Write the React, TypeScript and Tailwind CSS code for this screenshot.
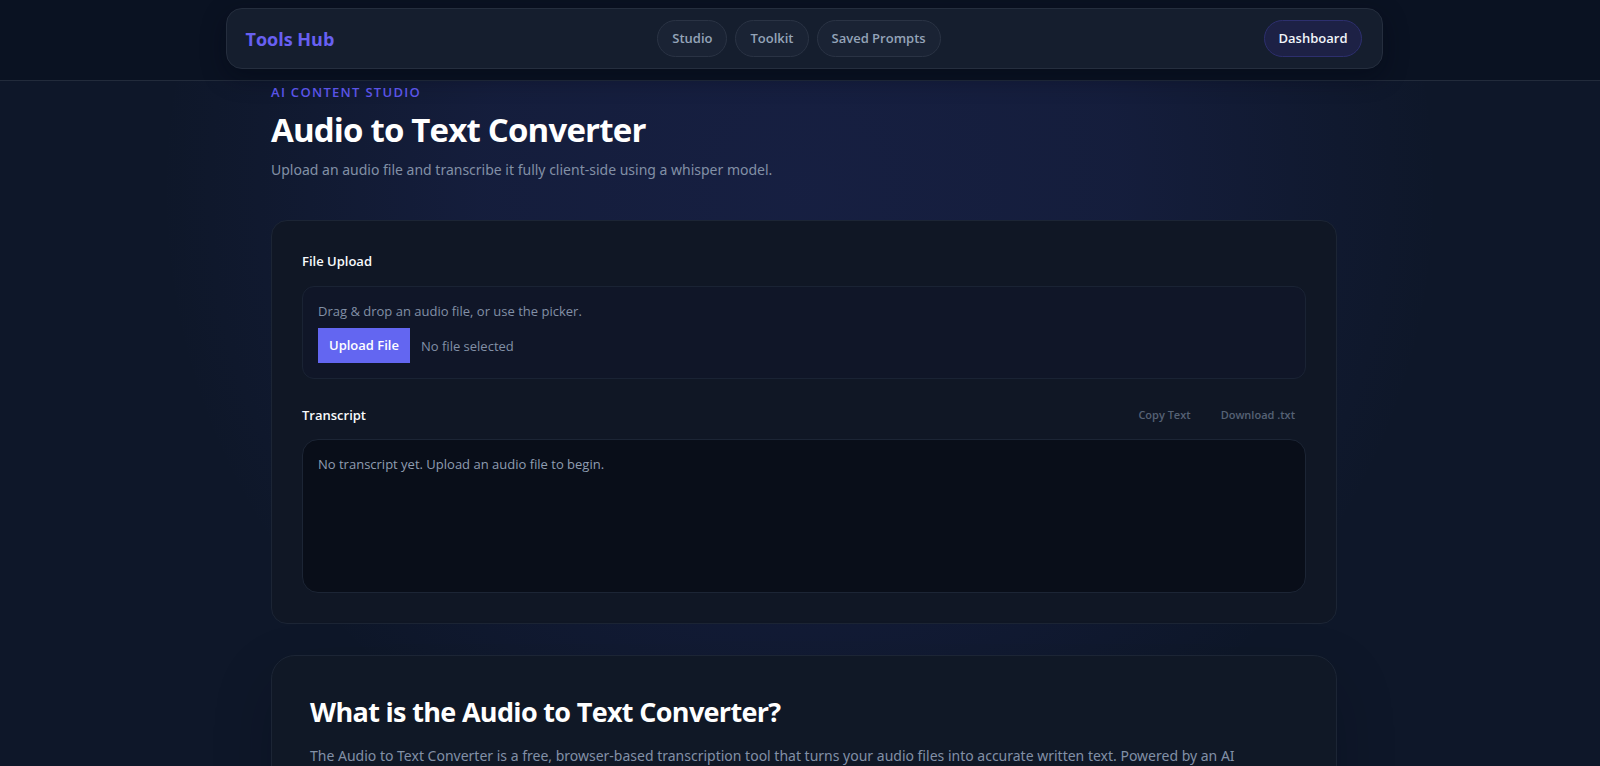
import { useRef, useState } from 'react';

const navLinks = ['Studio', 'Toolkit', 'Saved Prompts'];

const Header = () => (
  <header className="border-b border-[#222b3b] bg-[#0a1222] pt-2 pb-[11px] pl-2">
    <div className="mx-auto flex max-w-[1157px] items-center justify-between rounded-2xl border border-[#252e3e] bg-[#151e2e] px-[19px] py-[11px] shadow-[0_8px_24px_rgba(2,8,20,0.4)]">
      <a href="#" className="text-lg leading-6 font-bold text-[#6860f2]">
        Tools Hub
      </a>
      <nav className="flex gap-2">
        {navLinks.map((label) => (
          <a
            key={label}
            href="#"
            className="rounded-full border border-[#2a3344] bg-[#1a2334] px-[14px] py-2 text-[13px] leading-[19px] font-semibold text-[#94a3b8]"
          >
            {label}
          </a>
        ))}
      </nav>
      <a
        href="#"
        className="rounded-full border border-[#2d2f6e] bg-[#1d2145] px-[14px] py-2 text-[13px] leading-[19px] font-semibold text-[#f1f5f9]"
      >
        Dashboard
      </a>
    </div>
  </header>
);

const Converter = () => {
  const inputRef = useRef<HTMLInputElement>(null);
  const [fileName, setFileName] = useState('');

  return (
    <section className="rounded-2xl border border-[#1c2535] bg-[#101725] px-[30px] py-[30px]">
      <h2 className="text-[13px] leading-5 font-semibold text-[#f8fafc]">File Upload</h2>
      <div className="mt-[15px] rounded-xl border border-[#1a2334] bg-[#101628] px-[15px] pt-[14px] pb-[15px]">
        <label htmlFor="audio-file" className="block text-[13px] leading-5 text-[#8290a6]">
          Drag &amp; drop an audio file, or use the picker.
        </label>
        <input
          ref={inputRef}
          id="audio-file"
          type="file"
          accept="audio/*"
          className="hidden"
          onChange={(e) => setFileName(e.target.files?.[0]?.name ?? '')}
        />
        <div className="mt-[7px] flex items-center gap-[11px]">
          <button
            type="button"
            onClick={() => inputRef.current?.click()}
            className="bg-[#6366f1] px-[11px] py-2 text-[13px] leading-[19px] font-semibold text-white"
          >
            Upload File
          </button>
          <span className="text-[13px] leading-5 text-[#8290a6]">{fileName || 'No file selected'}</span>
        </div>
      </div>

      <div className="mt-[26px] flex items-center justify-between">
        <h2 className="text-[13px] leading-5 font-semibold text-[#f8fafc]">Transcript</h2>
        <div className="flex gap-2 text-[11px] leading-5 font-semibold text-[#566275]">
          <button type="button" className="px-[11px]">
            Copy Text
          </button>
          <button type="button" className="px-[11px]">
            Download .txt
          </button>
        </div>
      </div>
      <div className="mt-[14px] min-h-[154px] rounded-2xl border border-[#1c2535] bg-[#090e19] px-[15px] py-[14px] text-[13px] leading-5 text-[#8f9db1]">
        No transcript yet. Upload an audio file to begin.
      </div>
    </section>
  );
};

const About = () => (
  <section className="mt-[31px] rounded-3xl border border-[#1c2535] bg-[#101826] px-[38px] pt-[36px] pb-10 shadow-[0_24px_60px_rgba(2,8,20,0.2)]">
    <h2 className="text-[27px] leading-10 font-bold tracking-tight text-white">What is the Audio to Text Converter?</h2>
    <p className="mt-[10px] font-['Noto_Sans',sans-serif] text-[14px] leading-7 text-[#8290a6]">
      The Audio to Text Converter is a free, browser-based transcription tool that turns your audio files into accurate
      written text. Powered by an AI
    </p>
  </section>
);

const App = () => (
  <div className="flex h-screen flex-col overflow-hidden bg-[#0e1729] bg-[radial-gradient(circle_640px_at_50%_190px,rgba(79,86,229,0.13),rgba(79,86,229,0.1)_50%,transparent)] font-['Open_Sans','Noto_Sans',sans-serif]">
    <Header />
    <main className="pl-2">
      <div className="mx-auto max-w-[1066px] pt-px">
        <p className="text-[13px] leading-5 font-semibold tracking-widest text-[#5b54e6] uppercase">
          AI Content Studio
        </p>
        <h1 className="mt-2 text-[33px] leading-10 font-bold tracking-tight text-white">Audio to Text Converter</h1>
        <p className="mt-2 mb-[38px] font-['Noto_Sans',sans-serif] text-[14px] leading-6 text-[#8290a6]">
          Upload an audio file and transcribe it fully client-side using a whisper model.
        </p>
        <Converter />
        <About />
      </div>
    </main>
  </div>
);

export default App;
